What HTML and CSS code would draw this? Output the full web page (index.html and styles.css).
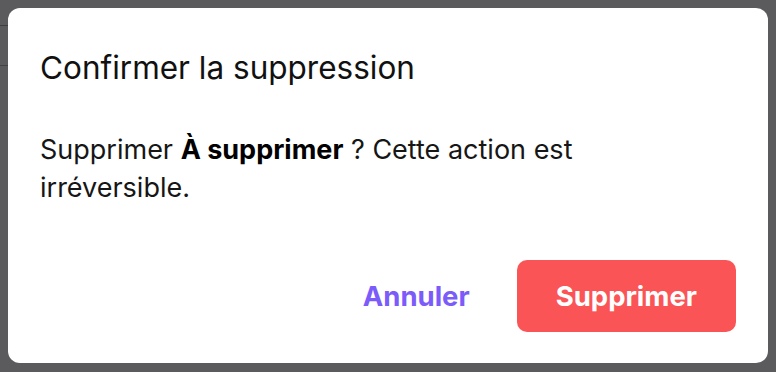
FILE: index.html
```html
<!DOCTYPE html>
<html lang="fr">
<head>
<meta charset="utf-8">
<title>Confirmer la suppression</title>
<link rel="stylesheet" href="styles.css">
</head>
<body>
<div class="backdrop">
  <div class="bg-header"></div>
  <div class="bg-row"></div>
</div>
<div class="overlay">
  <div class="dialog" role="dialog" aria-labelledby="dlg-title">
    <h2 class="dialog-title" id="dlg-title">Confirmer la suppression</h2>
    <p class="dialog-text">Supprimer <strong>À supprimer</strong> ? Cette action est irréversible.</p>
    <div class="dialog-actions">
      <button class="btn btn-ghost" type="button">Annuler</button>
      <button class="btn btn-danger" type="button">Supprimer</button>
    </div>
  </div>
</div>
</body>
</html>
```
FILE: styles.css
```css
* { box-sizing: border-box; }
html, body {
  margin: 0;
  width: 776px;
  height: 372px;
  overflow: hidden;
}
body {
  background: #5b5b5e;
  font-family: Inter, "Noto Sans", sans-serif;
  position: relative;
}
.backdrop {
  position: absolute;
  left: 0;
  top: 0;
  width: 300px;
}
.bg-header {
  height: 26px;
  border-bottom: 1px solid #3f3f42;
}
.bg-row {
  height: 40px;
  border-bottom: 1px solid #434346;
}
.overlay {
  position: absolute;
  inset: 0;
  padding: 8px;
}
.dialog {
  width: 760px;
  height: 355px;
  background: #ffffff;
  border-radius: 12px;
  padding: 41px 32px 31px 32px;
  display: flex;
  flex-direction: column;
}
.dialog-title {
  margin: 0;
  font-size: 31.5px;
  line-height: 38px;
  font-weight: 400;
  color: #111111;
}
.dialog-text {
  margin: 44px 0 0 0;
  max-width: 660px;
  font-size: 27px;
  line-height: 38px;
  color: #161616;
}
.dialog-text strong {
  font-weight: 700;
  color: #000;
}
.dialog-actions {
  margin-top: auto;
  display: flex;
  justify-content: flex-end;
  gap: 8px;
}
.btn {
  height: 72px;
  padding: 0 39px;
  border: none;
  border-radius: 10px;
  font-family: inherit;
  font-size: 27.5px;
  font-weight: 700;
  cursor: pointer;
  background: transparent;
}
.btn-ghost {
  color: #7b5cfa;
}
.btn-danger {
  background: #fb5456;
  color: #ffffff;
}
```
